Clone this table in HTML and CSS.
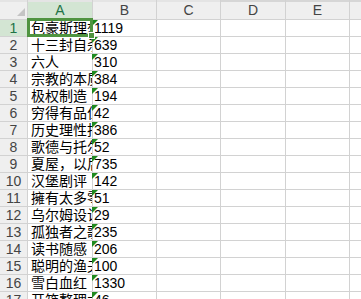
FILE: index.html
```html
<!DOCTYPE html>
<html lang="zh">
<head>
<meta charset="utf-8">
<title>Sheet</title>
<link rel="stylesheet" href="styles.css">
</head>
<body>
<div class="sheet">
  <div class="grid">
    <div class="hd corner"><span class="all"></span></div>
    <div class="hd col sel">A</div>
    <div class="hd col">B</div>
    <div class="hd col">C</div>
    <div class="hd col dark">D</div>
    <div class="hd col dark">E</div>
    <div class="hd col dark"></div>

    <div class="hd row sel">1</div><div class="c a">包豪斯理想</div><div class="c b"><i class="tri"></i>1119</div><div class="c"></div><div class="c"></div><div class="c"></div><div class="c"></div>
    <div class="hd row">2</div><div class="c a">十三封自杀信</div><div class="c b"><i class="tri"></i>639</div><div class="c"></div><div class="c"></div><div class="c"></div><div class="c"></div>
    <div class="hd row">3</div><div class="c a">六人</div><div class="c b"><i class="tri"></i>310</div><div class="c"></div><div class="c"></div><div class="c"></div><div class="c"></div>
    <div class="hd row">4</div><div class="c a">宗教的本质</div><div class="c b"><i class="tri"></i>384</div><div class="c"></div><div class="c"></div><div class="c"></div><div class="c"></div>
    <div class="hd row">5</div><div class="c a">极权制造</div><div class="c b"><i class="tri"></i>194</div><div class="c"></div><div class="c"></div><div class="c"></div><div class="c"></div>
    <div class="hd row">6</div><div class="c a">穷得有品位</div><div class="c b"><i class="tri"></i>42</div><div class="c"></div><div class="c"></div><div class="c"></div><div class="c"></div>
    <div class="hd row">7</div><div class="c a">历史理性批判</div><div class="c b"><i class="tri"></i>386</div><div class="c"></div><div class="c"></div><div class="c"></div><div class="c"></div>
    <div class="hd row">8</div><div class="c a">歌德与托尔斯泰</div><div class="c b"><i class="tri"></i>52</div><div class="c"></div><div class="c"></div><div class="c"></div><div class="c"></div>
    <div class="hd row">9</div><div class="c a">夏屋，以后</div><div class="c b"><i class="tri"></i>735</div><div class="c"></div><div class="c"></div><div class="c"></div><div class="c"></div>
    <div class="hd row">10</div><div class="c a">汉堡剧评</div><div class="c b"><i class="tri"></i>142</div><div class="c"></div><div class="c"></div><div class="c"></div><div class="c"></div>
    <div class="hd row">11</div><div class="c a">擁有太多零</div><div class="c b"><i class="tri"></i>51</div><div class="c"></div><div class="c"></div><div class="c"></div><div class="c"></div>
    <div class="hd row">12</div><div class="c a">乌尔姆设计</div><div class="c b"><i class="tri"></i>29</div><div class="c"></div><div class="c"></div><div class="c"></div><div class="c"></div>
    <div class="hd row">13</div><div class="c a">孤独者之歌</div><div class="c b"><i class="tri"></i>235</div><div class="c"></div><div class="c"></div><div class="c"></div><div class="c"></div>
    <div class="hd row">14</div><div class="c a">读书随感</div><div class="c b"><i class="tri"></i>206</div><div class="c"></div><div class="c"></div><div class="c"></div><div class="c"></div>
    <div class="hd row">15</div><div class="c a">聪明的渔夫</div><div class="c b"><i class="tri"></i>100</div><div class="c"></div><div class="c"></div><div class="c"></div><div class="c"></div>
    <div class="hd row">16</div><div class="c a">雪白血红</div><div class="c b"><i class="tri"></i>1330</div><div class="c"></div><div class="c"></div><div class="c"></div><div class="c"></div>
    <div class="hd row">17</div><div class="c a">开箱整理术</div><div class="c b"><i class="tri"></i>46</div><div class="c"></div><div class="c"></div><div class="c"></div><div class="c"></div>
    <div class="hd row">18</div><div class="c a"></div><div class="c b"></div><div class="c"></div><div class="c"></div><div class="c"></div><div class="c"></div>
  </div>
  <div class="selection"><span class="handle"></span></div>
</div>
</body>
</html>
```
FILE: styles.css
```css
html, body {
  margin: 0;
  padding: 0;
  background: #ffffff;
  overflow: hidden;
}

.sheet {
  position: relative;
  width: 361px;
  height: 299px;
  overflow: hidden;
  font-family: "Liberation Sans", "Noto Sans CJK SC", sans-serif;
}

.grid {
  display: grid;
  grid-template-columns: 27px 64px 63px 63px 64px 63px 1fr;
  grid-template-rows: 19px;
  grid-auto-rows: 16px;
  gap: 1px;
  background: #d2d2d2;
}

.hd {
  background: #efefef;
  color: #444444;
  font-size: 14px;
  line-height: 16px;
  display: flex;
  align-items: center;
  justify-content: center;
  overflow: hidden;
}

.col {
  border-top: 2px solid #e4e4e4;
  padding-top: 0;
  line-height: 17px;
}

.col.dark {
  border-top-color: #d6d6d6;
}

.corner {
  position: relative;
  border-top: 2px solid #e4e4e4;
}

.all {
  position: absolute;
  right: 2px;
  bottom: 3px;
  width: 0;
  height: 0;
  border-left: 8px solid transparent;
  border-bottom: 8px solid #c4c4c4;
}

.hd.sel {
  background: #d3e5d3;
  color: #217346;
}

.c {
  background: #ffffff;
  color: #000000;
  font-size: 14px;
  line-height: 16px;
  white-space: nowrap;
  overflow: hidden;
  position: relative;
}

.a {
  padding-left: 3px;
}

.b {
  padding-left: 1px;
  overflow: visible;
}

.tri {
  position: absolute;
  left: -1px;
  top: 0;
  width: 0;
  height: 0;
  border-top: 6px solid #1f8a1f;
  border-right: 6px solid transparent;
}

.selection {
  position: absolute;
  left: 27px;
  top: 18px;
  width: 66px;
  height: 19px;
  box-sizing: border-box;
  border: 3px solid #4f9440;
}

.handle {
  position: absolute;
  right: -5px;
  bottom: -5px;
  width: 5px;
  height: 5px;
  background: #4f9440;
  border: 1px solid #ffffff;
}
```
